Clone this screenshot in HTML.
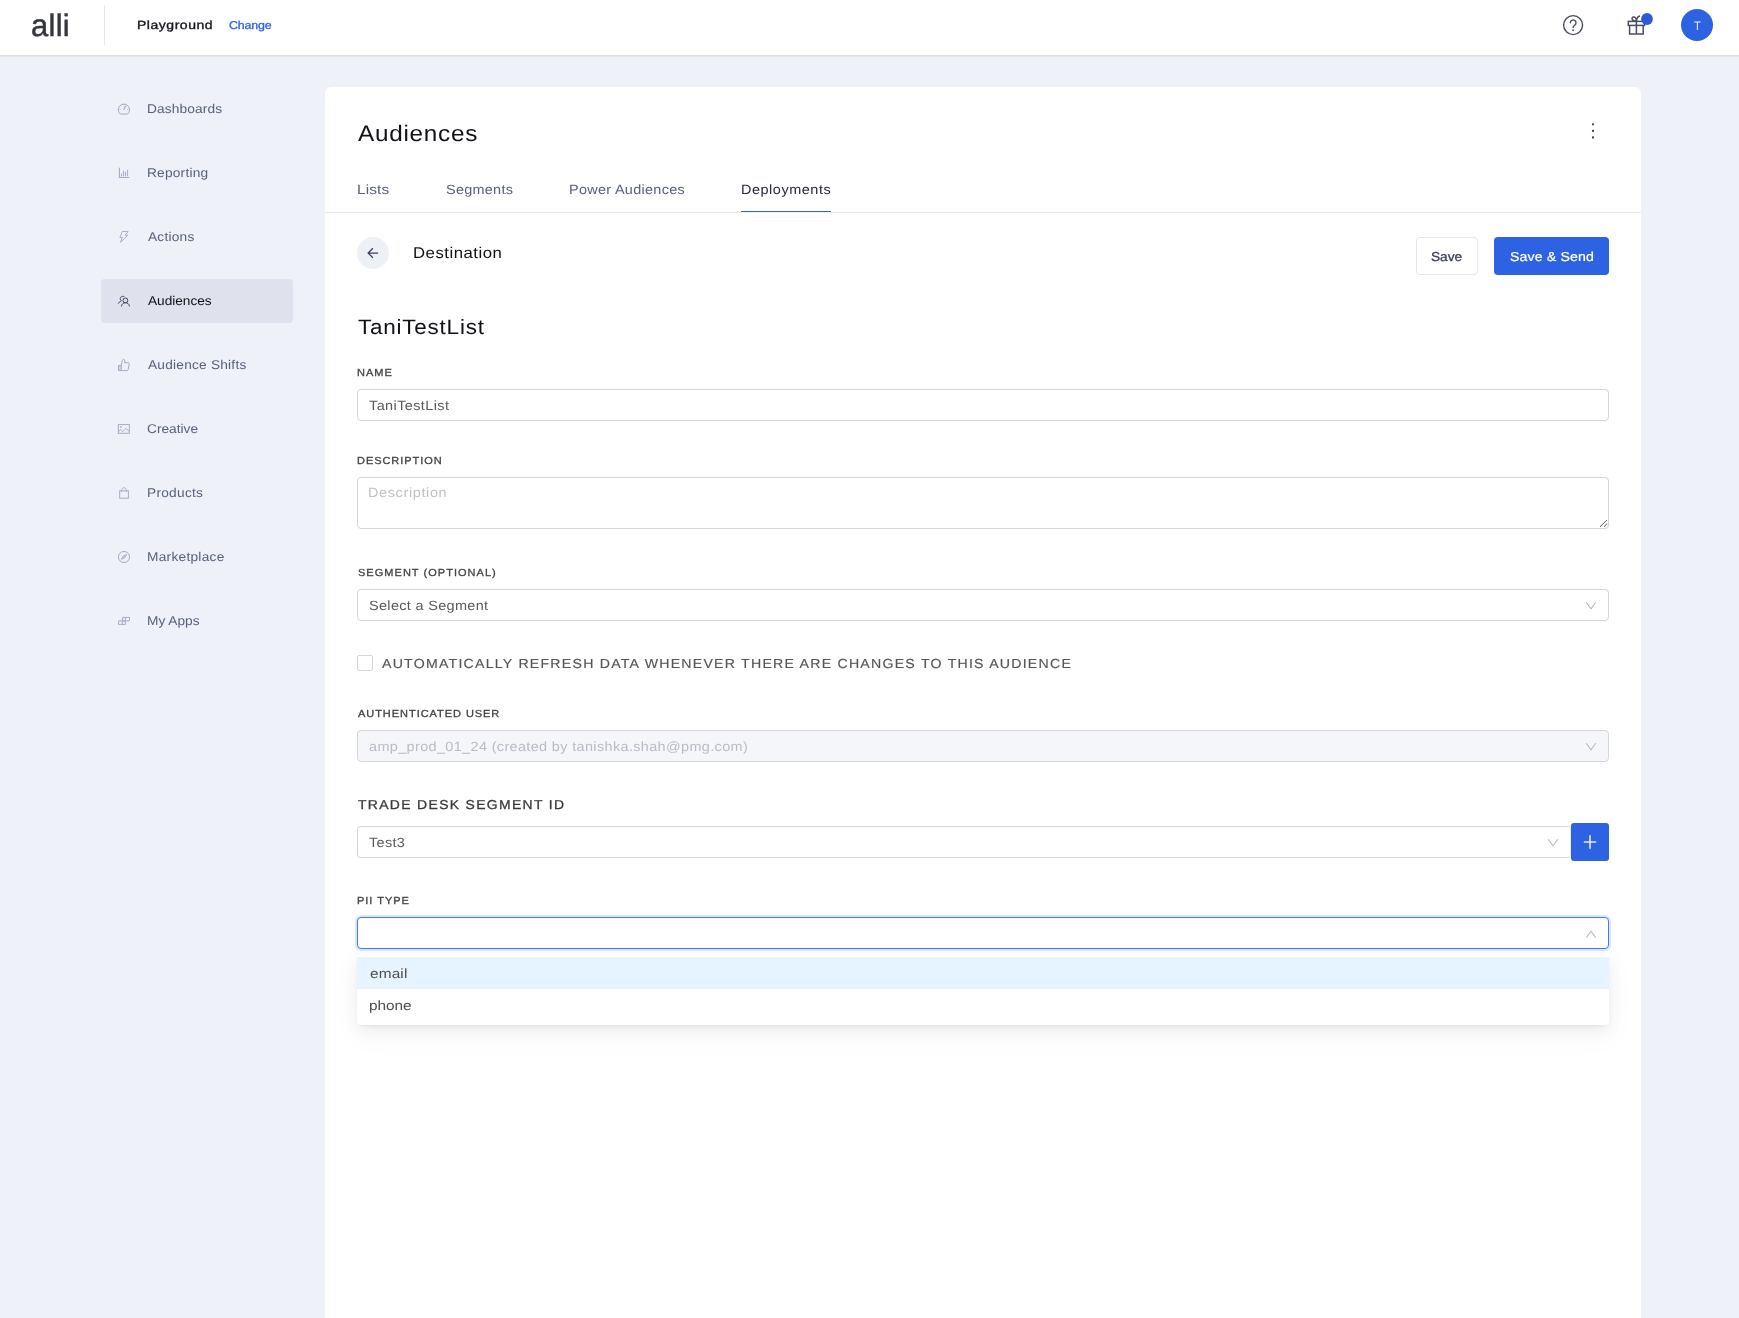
<!DOCTYPE html>
<html lang="en">
<head>
<meta charset="utf-8">
<title>Audiences - Destination</title>
<style>
*{box-sizing:border-box;margin:0;padding:0}
html,body{width:1739px;height:1318px;overflow:hidden}
body{background:#eef1f8;font-family:"Liberation Sans",Arial,sans-serif;color:#1f2230;position:relative}
#root{position:absolute;left:0;top:0;width:1739px;height:1318px;will-change:transform}
#root>*,.p{position:absolute}
.t{position:absolute;white-space:nowrap;transform-origin:0 50%;display:block}
svg{overflow:visible}
#hdr{left:0;top:0;width:1739px;height:55px;background:#fff;box-shadow:0 1px 0 #dadde6,0 2px 0 rgba(205,210,222,.3)}
#hdiv{left:104px;top:5px;width:1px;height:40px;background:#e6e6e9}
#avatar{left:1681px;top:9px;width:32px;height:32px;border-radius:50%;background:#2d62e3}
#navon{left:101px;top:279px;width:192px;height:44px;border-radius:4px;background:#dfe2ec}
.ic{width:24px;height:22px;left:112px;fill:none;stroke:#a5acc4;stroke-width:1}
.ic.on{stroke:#3d4258}
#card{left:325px;top:87px;width:1316px;height:1300px;background:#fff;border-radius:6px}
#tabline{left:325px;top:212px;width:1316px;height:1px;background:#e7e8ec}
#tabink{left:741px;top:211px;width:90px;height:2px;background:linear-gradient(#2d62e3 0,#2d62e3 50%,#f0f2f9 50%,#f0f2f9 100%)}
#back{left:357px;top:237px;width:32px;height:32px;border-radius:50%;background:#eef0f8}
#saveb{left:1416px;top:237px;width:62px;height:38px;border-radius:4px;background:#fff;border:1px solid #e4e6ec}
#sendb{left:1494px;top:237px;width:115px;height:38px;border-radius:4px;background:#2d62e3}
.inp{left:357px;width:1252px;height:32px;border:1px solid #d6d6d6;border-radius:4px;background:#fff}
.inp.dis{background:#f5f6fa}
.inp.focus{border-color:#437cee;box-shadow:0 0 0 2px rgba(45,98,227,.17)}
.chev{width:10px;height:7px;fill:none;stroke:#b9b9b9;stroke-width:1.05}
#plus{left:1571px;top:823px;width:38px;height:38px;border-radius:3px;background:#2d62e3}
#cb{left:357px;top:655px;width:16px;height:16px;border:1px solid #d6d6d6;border-radius:2px;background:#fff}
#dd{left:357px;top:953px;width:1252px;height:72px;background:#fff;border-radius:4px;box-shadow:0 3px 6px -4px rgba(0,0,0,.12),0 6px 16px 0 rgba(0,0,0,.06),0 9px 28px 8px rgba(0,0,0,.02)}
#opton{left:357px;top:957px;width:1252px;height:32px;background:#e6f4ff}
</style>
</head>
<body>
<div id="root">
<!-- ===== header ===== -->
<div id="hdr"></div>
<span class="t" id="logo" style="left:30.80px;top:6.00px;font-size:31.0px;line-height:40px;color:#34363d;letter-spacing:0.283px;transform:scaleX(1.0000) skewX(.05deg);-webkit-text-stroke:0.45px #34363d">alli</span>
<div id="hdiv"></div>
<span class="t" id="pg" style="left:137.30px;top:17.00px;font-size:11.9px;line-height:16px;color:#14161d;letter-spacing:0.433px;transform:scaleX(1.1800) skewX(.05deg);-webkit-text-stroke:0.35px #14161d">Playground</span>
<span class="t" id="chg" style="left:229.40px;top:17.00px;font-size:11.3px;line-height:16px;color:#2d62e0;letter-spacing:-0.145px;transform:scaleX(1.1000) skewX(.05deg);-webkit-text-stroke:0.3px #2d62e0">Change</span>
<svg id="help" style="left:1561px;top:13px" width="24" height="24" viewBox="0 0 24 24" fill="none" stroke="#474c61" stroke-width="1.400"><circle cx="12.100" cy="12.100" r="9.500"/><path d="M9.300 9.800a2.850 2.850 0 1 1 4.300 2.450c-.95.550-1.450 1.050-1.450 2.250" stroke-linecap="round"/><circle cx="12.100" cy="17.100" r=".95" fill="#474c61" stroke="none"/></svg>
<svg id="gift" style="left:1624px;top:10px" width="32" height="28" viewBox="0 0 32 28" fill="none" stroke="#474c61" stroke-width="1.500"><rect x="4.300" y="11.400" width="16.200" height="4"/><path d="M5.600 15.400v8.500h13.600v-8.500M12.400 11.400v12.500"/><path d="M12.400 11c-2.800 0-4.300-1-4.300-2.500s2-2.300 3.300-.8c.6.700 1 1.800 1 3.300zM12.400 11c.3-2.800 1.500-4.600 3.600-5"/></svg>
<svg id="dot" style="left:1641px;top:13px" width="12" height="12" viewBox="0 0 12 12"><circle cx="6" cy="6" r="5.900" fill="#2b5bd9"/></svg>
<div id="avatar"></div>
<span class="t" id="av" style="left:1693.65px;top:18.00px;font-size:12.2px;line-height:16px;color:#e6ecfc;letter-spacing:0.000px;transform:scaleX(0.9149) skewX(.05deg)">T</span>
<!-- ===== sidebar ===== -->
<div id="navon"></div>
<svg class="ic" style="top:98px" viewBox="0 0 24 22"><path d="M8.300 16.050A5.630 5.630 0 1 1 15.500 16.050z"/><path d="M11.600 11.600l2.300-3.800" stroke-width="1.200"/><path d="M7.400 11.400h1.200M15.200 11.400h1.200M11.900 6.300v1.100M8.800 7.600l.8.800" stroke-width=".8"/></svg>
<svg class="ic" style="top:162px" viewBox="0 0 24 22"><path d="M7.400 5.800v9.700h10" stroke-width="1.100"/><path d="M9.500 12v2M11.500 9.200v4.800M13.500 10.200v3.800M15.600 8.200v5.800" stroke-linecap="round"/></svg>
<svg class="ic" style="top:226px" viewBox="0 0 24 22"><path d="M10.300 5.500h5.800l-2.900 3.700h2.700l-7.400 7 1.800-4.800H7.900z" stroke-linejoin="round" stroke-width=".95"/></svg>
<svg class="ic on" style="top:290px" viewBox="0 0 24 22" stroke-width="1.050"><circle cx="13.400" cy="10.400" r="2.400"/><path d="M9.400 16.400c.5-2.700 2-3.700 4-3.700s3.600 1 4.100 3.700M12.300 6.600c-1.300-.5-2.900-.3-3.700.9-.7 1.100-.4 2.400.8 3.100-1.400.7-2.400 1.800-3.100 3"/></svg>
<svg class="ic" style="top:354px" viewBox="0 0 24 22"><path d="M6.500 11.400h2.800v5.200H6.500z" fill="#ced2df"/><path d="M9.300 11.200l1-4.500c.2-1.100 1-1.500 1.600-1.300.7.200 1 .8.900 1.600l-.3 1.700h3.700c.8 0 1.200.6 1 1.300l-1.100 5.700c-.1.600-.5.900-1.100.9H9.300"/></svg>
<svg class="ic" style="top:418px" viewBox="0 0 24 22"><rect x="6.350" y="6.600" width="11" height="8.700"/><circle cx="9" cy="8.900" r=".9" fill="#a5acc4" stroke="none"/><path d="M6.600 13.800l2-2.400 2.100 2.300 3.300-3.500 3.300 3.500" stroke-width=".9"/></svg>
<svg class="ic" style="top:482px" viewBox="0 0 24 22"><rect x="7.700" y="8.850" width="8.700" height="7.350"/><path d="M9.800 10V8.200c0-1.500 1-2.500 2.200-2.500s2.200 1 2.200 2.500V10" stroke-width=".9"/></svg>
<svg class="ic" style="top:546px" viewBox="0 0 24 22"><circle cx="12" cy="11" r="5.550"/><path d="M14.600 8.500l-1.900 3.300-3.400 1.400 1.900-3.200z" stroke-width=".9" fill="#c9cddb"/></svg>
<svg class="ic" style="top:610px" viewBox="0 0 24 22"><path d="M10.500 7.400h7v3.450h-7zM6.600 10.850h6.800v3.550H6.600zM13.400 7.400v3.450M10.300 10.850v3.550"/></svg>
<span class="t" id="n1" style="left:146.90px;top:100.00px;font-size:12.7px;line-height:18px;color:#59607c;letter-spacing:0.113px;transform:scaleX(1.0800) skewX(.05deg)">Dashboards</span>
<span class="t" id="n2" style="left:146.90px;top:164.00px;font-size:12.7px;line-height:18px;color:#59607c;letter-spacing:0.197px;transform:scaleX(1.0800) skewX(.05deg)">Reporting</span>
<span class="t" id="n3" style="left:147.70px;top:228.00px;font-size:12.7px;line-height:18px;color:#59607c;letter-spacing:0.208px;transform:scaleX(1.0800) skewX(.05deg)">Actions</span>
<span class="t" id="n4" style="left:147.70px;top:292.00px;font-size:12.7px;line-height:18px;color:#101116;letter-spacing:-0.035px;transform:scaleX(1.0800) skewX(.05deg)">Audiences</span>
<span class="t" id="n5" style="left:147.70px;top:356.00px;font-size:12.7px;line-height:18px;color:#59607c;letter-spacing:0.202px;transform:scaleX(1.0800) skewX(.05deg)">Audience Shifts</span>
<span class="t" id="n6" style="left:147.15px;top:420.00px;font-size:12.7px;line-height:18px;color:#59607c;letter-spacing:0.007px;transform:scaleX(1.0800) skewX(.05deg)">Creative</span>
<span class="t" id="n7" style="left:147.20px;top:484.00px;font-size:12.7px;line-height:18px;color:#59607c;letter-spacing:0.245px;transform:scaleX(1.0800) skewX(.05deg)">Products</span>
<span class="t" id="n8" style="left:147.20px;top:548.00px;font-size:12.7px;line-height:18px;color:#59607c;letter-spacing:0.245px;transform:scaleX(1.0800) skewX(.05deg)">Marketplace</span>
<span class="t" id="n9" style="left:147.20px;top:612.00px;font-size:12.7px;line-height:18px;color:#59607c;letter-spacing:0.000px;transform:scaleX(1.0800) skewX(.05deg)">My Apps</span>
<!-- ===== card ===== -->
<div id="card"></div>
<span class="t" id="title" style="left:357.80px;top:119.00px;font-size:22.5px;line-height:30px;color:#101116;letter-spacing:0.677px;transform:scaleX(1.0800) skewX(.05deg)">Audiences</span>
<svg id="kebab" style="left:1588px;top:121px" width="10" height="20" viewBox="0 0 10 20"><circle cx="5" cy="3.300" r="1.150" fill="#3b4157"/><circle cx="5" cy="9.900" r="1.150" fill="#3b4157"/><circle cx="5" cy="16.500" r="1.150" fill="#3b4157"/></svg>
<span class="t" id="t1" style="left:356.95px;top:181.00px;font-size:13.4px;line-height:18px;color:#59607c;letter-spacing:0.098px;transform:scaleX(1.1500) skewX(.05deg)">Lists</span>
<span class="t" id="t2" style="left:445.75px;top:181.00px;font-size:13.4px;line-height:18px;color:#59607c;letter-spacing:0.238px;transform:scaleX(1.0800) skewX(.05deg)">Segments</span>
<span class="t" id="t3" style="left:568.95px;top:181.00px;font-size:13.4px;line-height:18px;color:#59607c;letter-spacing:0.265px;transform:scaleX(1.0800) skewX(.05deg)">Power Audiences</span>
<span class="t" id="t4" style="left:741.05px;top:181.00px;font-size:13.4px;line-height:18px;color:#262a3b;letter-spacing:0.486px;transform:scaleX(1.0800) skewX(.05deg)">Deployments</span>
<div id="tabline"></div><div id="tabink"></div>
<div id="back"></div>
<svg id="arrow" style="left:367px;top:247px" width="12" height="12" viewBox="0 0 12 12" fill="none" stroke="#3d4359" stroke-width="1.250"><path d="M11.100 6H1.500M5.900 1.200L1.100 6l4.800 4.800"/></svg>
<span class="t" id="dest" style="left:413.05px;top:243.00px;font-size:15.5px;line-height:20px;color:#101116;letter-spacing:0.472px;transform:scaleX(1.0800) skewX(.05deg)">Destination</span>
<div id="saveb"></div>
<span class="t" id="save" style="left:1431.40px;top:248.00px;font-size:12.9px;line-height:18px;color:#3b4157;letter-spacing:-0.075px;transform:scaleX(1.0666) skewX(.05deg);-webkit-text-stroke:0.3px #3b4157">Save</span>
<div id="sendb"></div>
<span class="t" id="send" style="left:1509.60px;top:248.00px;font-size:12.9px;line-height:18px;color:#ffffff;letter-spacing:0.109px;transform:scaleX(1.1000) skewX(.05deg);-webkit-text-stroke:0.22px #ffffff">Save &amp; Send</span>
<span class="t" id="h2" style="left:357.70px;top:313.00px;font-size:20.8px;line-height:28px;color:#101116;letter-spacing:0.720px;transform:scaleX(1.0800) skewX(.05deg)">TaniTestList</span>
<!-- ===== form ===== -->
<span class="t" id="l1" style="left:357.15px;top:366.00px;font-size:10.2px;line-height:14px;color:#444444;letter-spacing:0.941px;transform:scaleX(1.0800) skewX(.05deg);-webkit-text-stroke:0.3px #444444">NAME</span>
<div class="inp" style="top:389px"></div>
<span class="t" id="i1" style="left:369.35px;top:397.00px;font-size:13.4px;line-height:18px;color:#5a5a5a;letter-spacing:0.370px;transform:scaleX(1.0800) skewX(.05deg)">TaniTestList</span>
<span class="t" id="l2" style="left:357.15px;top:454.00px;font-size:10.2px;line-height:14px;color:#444444;letter-spacing:0.870px;transform:scaleX(1.0800) skewX(.05deg);-webkit-text-stroke:0.3px #444444">DESCRIPTION</span>
<div class="inp" style="top:477px;height:52px"></div>
<svg id="grip" style="left:1599px;top:519px" width="9" height="9" viewBox="0 0 9 9" fill="none" stroke="#555" stroke-width="1"><path d="M1 7.800L7.900 1.200M5.200 7.800L8 4.600"/></svg>
<span class="t" id="i2" style="left:368.45px;top:484.00px;font-size:13.4px;line-height:18px;color:#c2c2c2;letter-spacing:0.579px;transform:scaleX(1.0800) skewX(.05deg)">Description</span>
<span class="t" id="l3" style="left:357.65px;top:566.00px;font-size:10.2px;line-height:14px;color:#444444;letter-spacing:0.953px;transform:scaleX(1.0800) skewX(.05deg);-webkit-text-stroke:0.3px #444444">SEGMENT (OPTIONAL)</span>
<div class="inp" style="top:589px"></div>
<svg class="chev" style="left:1586px;top:602px" viewBox="0 0 10 7"><path d="M.2 .3L5 6.900 9.800 .3"/></svg>
<span class="t" id="i3" style="left:368.95px;top:597.00px;font-size:13.4px;line-height:18px;color:#5a5a5a;letter-spacing:0.306px;transform:scaleX(1.0800) skewX(.05deg)">Select a Segment</span>
<div id="cb"></div>
<span class="t" id="cbl" style="left:382.00px;top:655.00px;font-size:13.1px;line-height:18px;color:#555555;letter-spacing:1.138px;transform:scaleX(1.0800) skewX(.05deg);-webkit-text-stroke:0.15px #555555">AUTOMATICALLY REFRESH DATA WHENEVER THERE ARE CHANGES TO THIS AUDIENCE</span>
<span class="t" id="l4" style="left:357.90px;top:707.00px;font-size:10.2px;line-height:14px;color:#444444;letter-spacing:0.882px;transform:scaleX(1.0800) skewX(.05deg);-webkit-text-stroke:0.3px #444444">AUTHENTICATED USER</span>
<div class="inp dis" style="top:730px"></div>
<svg class="chev" style="left:1586px;top:743px" viewBox="0 0 10 7"><path d="M.2 .3L5 6.900 9.800 .3"/></svg>
<span class="t" id="i4" style="left:368.85px;top:738.00px;font-size:13.4px;line-height:18px;color:#b9bcc6;letter-spacing:0.324px;transform:scaleX(1.0800) skewX(.05deg)">amp_prod_01_24 (created by tanishka.shah@pmg.com)</span>
<span class="t" id="l5" style="left:357.75px;top:796.00px;font-size:12.9px;line-height:18px;color:#3a3a3a;letter-spacing:1.243px;transform:scaleX(1.0800) skewX(.05deg);-webkit-text-stroke:0.3px #3a3a3a">TRADE DESK SEGMENT ID</span>
<div class="inp" style="top:826px;width:1214px;border-right-color:#eceae6;border-radius:4px 3px 3px 4px"></div>
<svg class="chev" style="left:1548px;top:839px" viewBox="0 0 10 7"><path d="M.2 .3L5 6.900 9.800 .3"/></svg>
<span class="t" id="i5" style="left:369.45px;top:834.00px;font-size:13.4px;line-height:18px;color:#5a5a5a;letter-spacing:0.289px;transform:scaleX(1.0800) skewX(.05deg)">Test3</span>
<div id="plus"></div>
<svg id="plusi" style="left:1583px;top:835px" width="14" height="14" viewBox="0 0 14 14" stroke="#e4ebfc" stroke-width="1.600"><path d="M7 .3v13.400M.8 7h12.400"/></svg>
<span class="t" id="l6" style="left:357.15px;top:894.00px;font-size:10.2px;line-height:14px;color:#444444;letter-spacing:0.899px;transform:scaleX(1.0800) skewX(.05deg);-webkit-text-stroke:0.3px #444444">PII TYPE</span>
<div class="inp focus" style="top:917px"></div>
<svg class="chev" style="left:1586px;top:931px" viewBox="0 0 10 7"><path d="M.2 6.700L5 .2 9.800 6.700"/></svg>
<div id="dd"></div>
<div id="opton"></div>
<span class="t" id="o1" style="left:369.55px;top:965.00px;font-size:13.4px;line-height:18px;color:#4f4f4f;letter-spacing:0.109px;transform:scaleX(1.1500) skewX(.05deg)">email</span>
<span class="t" id="o2" style="left:369.30px;top:997.00px;font-size:13.4px;line-height:18px;color:#4f4f4f;letter-spacing:-0.033px;transform:scaleX(1.1500) skewX(.05deg)">phone</span>
</div>
</body>
</html>
